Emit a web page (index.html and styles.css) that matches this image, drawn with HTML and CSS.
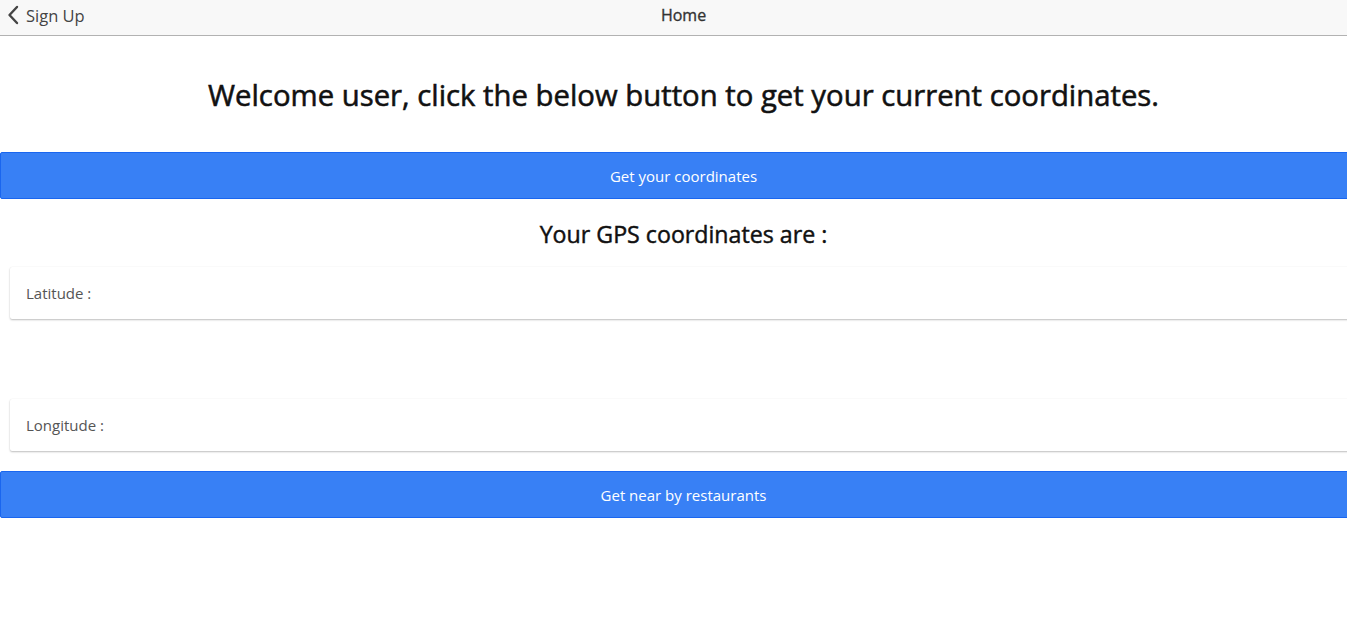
FILE: index.html
```html
<!DOCTYPE html>
<html>
<head>
<meta charset="utf-8">
<link rel="stylesheet" href="styles.css">
</head>
<body>
<div class="page">
<header class="navbar">
  <a class="back">
    <svg class="chev" width="12" height="20" viewBox="0 0 12 20"><path d="M10 2 L2.5 10 L10 18" fill="none" stroke="#444" stroke-width="2.4" stroke-linecap="round" stroke-linejoin="round"/></svg>
    <span>Sign Up</span>
  </a>
  <div class="title">Home</div>
</header>
<main class="content">
  <h1 class="welcome">Welcome user, click the below button to get your current coordinates.</h1>
  <button class="btn">Get your coordinates</button>
  <h2 class="gps">Your GPS coordinates are :</h2>
  <div class="card">Latitude :</div>
  <div class="spacer"></div>
  <div class="card">Longitude :</div>
  <button class="btn btn2">Get near by restaurants</button>
</main>
</div>
</body>
</html>
```
FILE: styles.css
```css
html, body {
  margin: 0;
  padding: 0;
  overflow: hidden;
  background: #fff;
  font-family: "Open Sans", "Noto Sans", sans-serif;
}
.page {
  width: 1367px;
}
.navbar {
  height: 35px;
  background: #f8f8f8;
  border-bottom: 1px solid #b2b2b2;
  display: flex;
  align-items: center;
  justify-content: center;
  position: relative;
}
.back {
  position: absolute;
  left: 7px;
  top: 0;
  height: 30px;
  display: flex;
  align-items: center;
  gap: 7px;
  color: #444;
  font-size: 16.5px;
}
.chev { display: block; }
.title {
  color: #333;
  font-size: 16px;
  font-weight: 400;
  -webkit-text-stroke: 0.35px #333;
  margin-top: -5px;
}
.content {
  display: flex;
  flex-direction: column;
}
.welcome {
  margin: 40px 0 0;
  height: 76px;
  text-align: center;
  font-size: 29.3px;
  font-weight: 400;
  -webkit-text-stroke: 0.55px #111;
  color: #111;
  line-height: 38px;
}
.btn {
  display: block;
  width: 100%;
  height: 47px;
  background: #3880f5;
  border: 1px solid #1a66ef;
  border-radius: 2px;
  color: #fff;
  font-family: inherit;
  font-size: 15px;
  margin: 0;
  padding: 0;
}
.gps {
  margin: 20px 0 0;
  height: 48px;
  text-align: center;
  font-size: 23.2px;
  font-weight: 400;
  -webkit-text-stroke: 0.45px #111;
  color: #111;
  line-height: 30px;
}
.card {
  margin-left: 10px;
  width: 100%;
  height: 52px;
  box-sizing: border-box;
  display: flex;
  align-items: center;
  padding-left: 16px;
  background: #fff;
  color: #555;
  font-size: 15px;
  border-radius: 2px;
  box-shadow: 0 1px 2px rgba(0,0,0,0.25), 0 0 1px rgba(0,0,0,0.08);
}
.spacer { height: 80px; }
.btn2 { margin-top: 20px; }
```
